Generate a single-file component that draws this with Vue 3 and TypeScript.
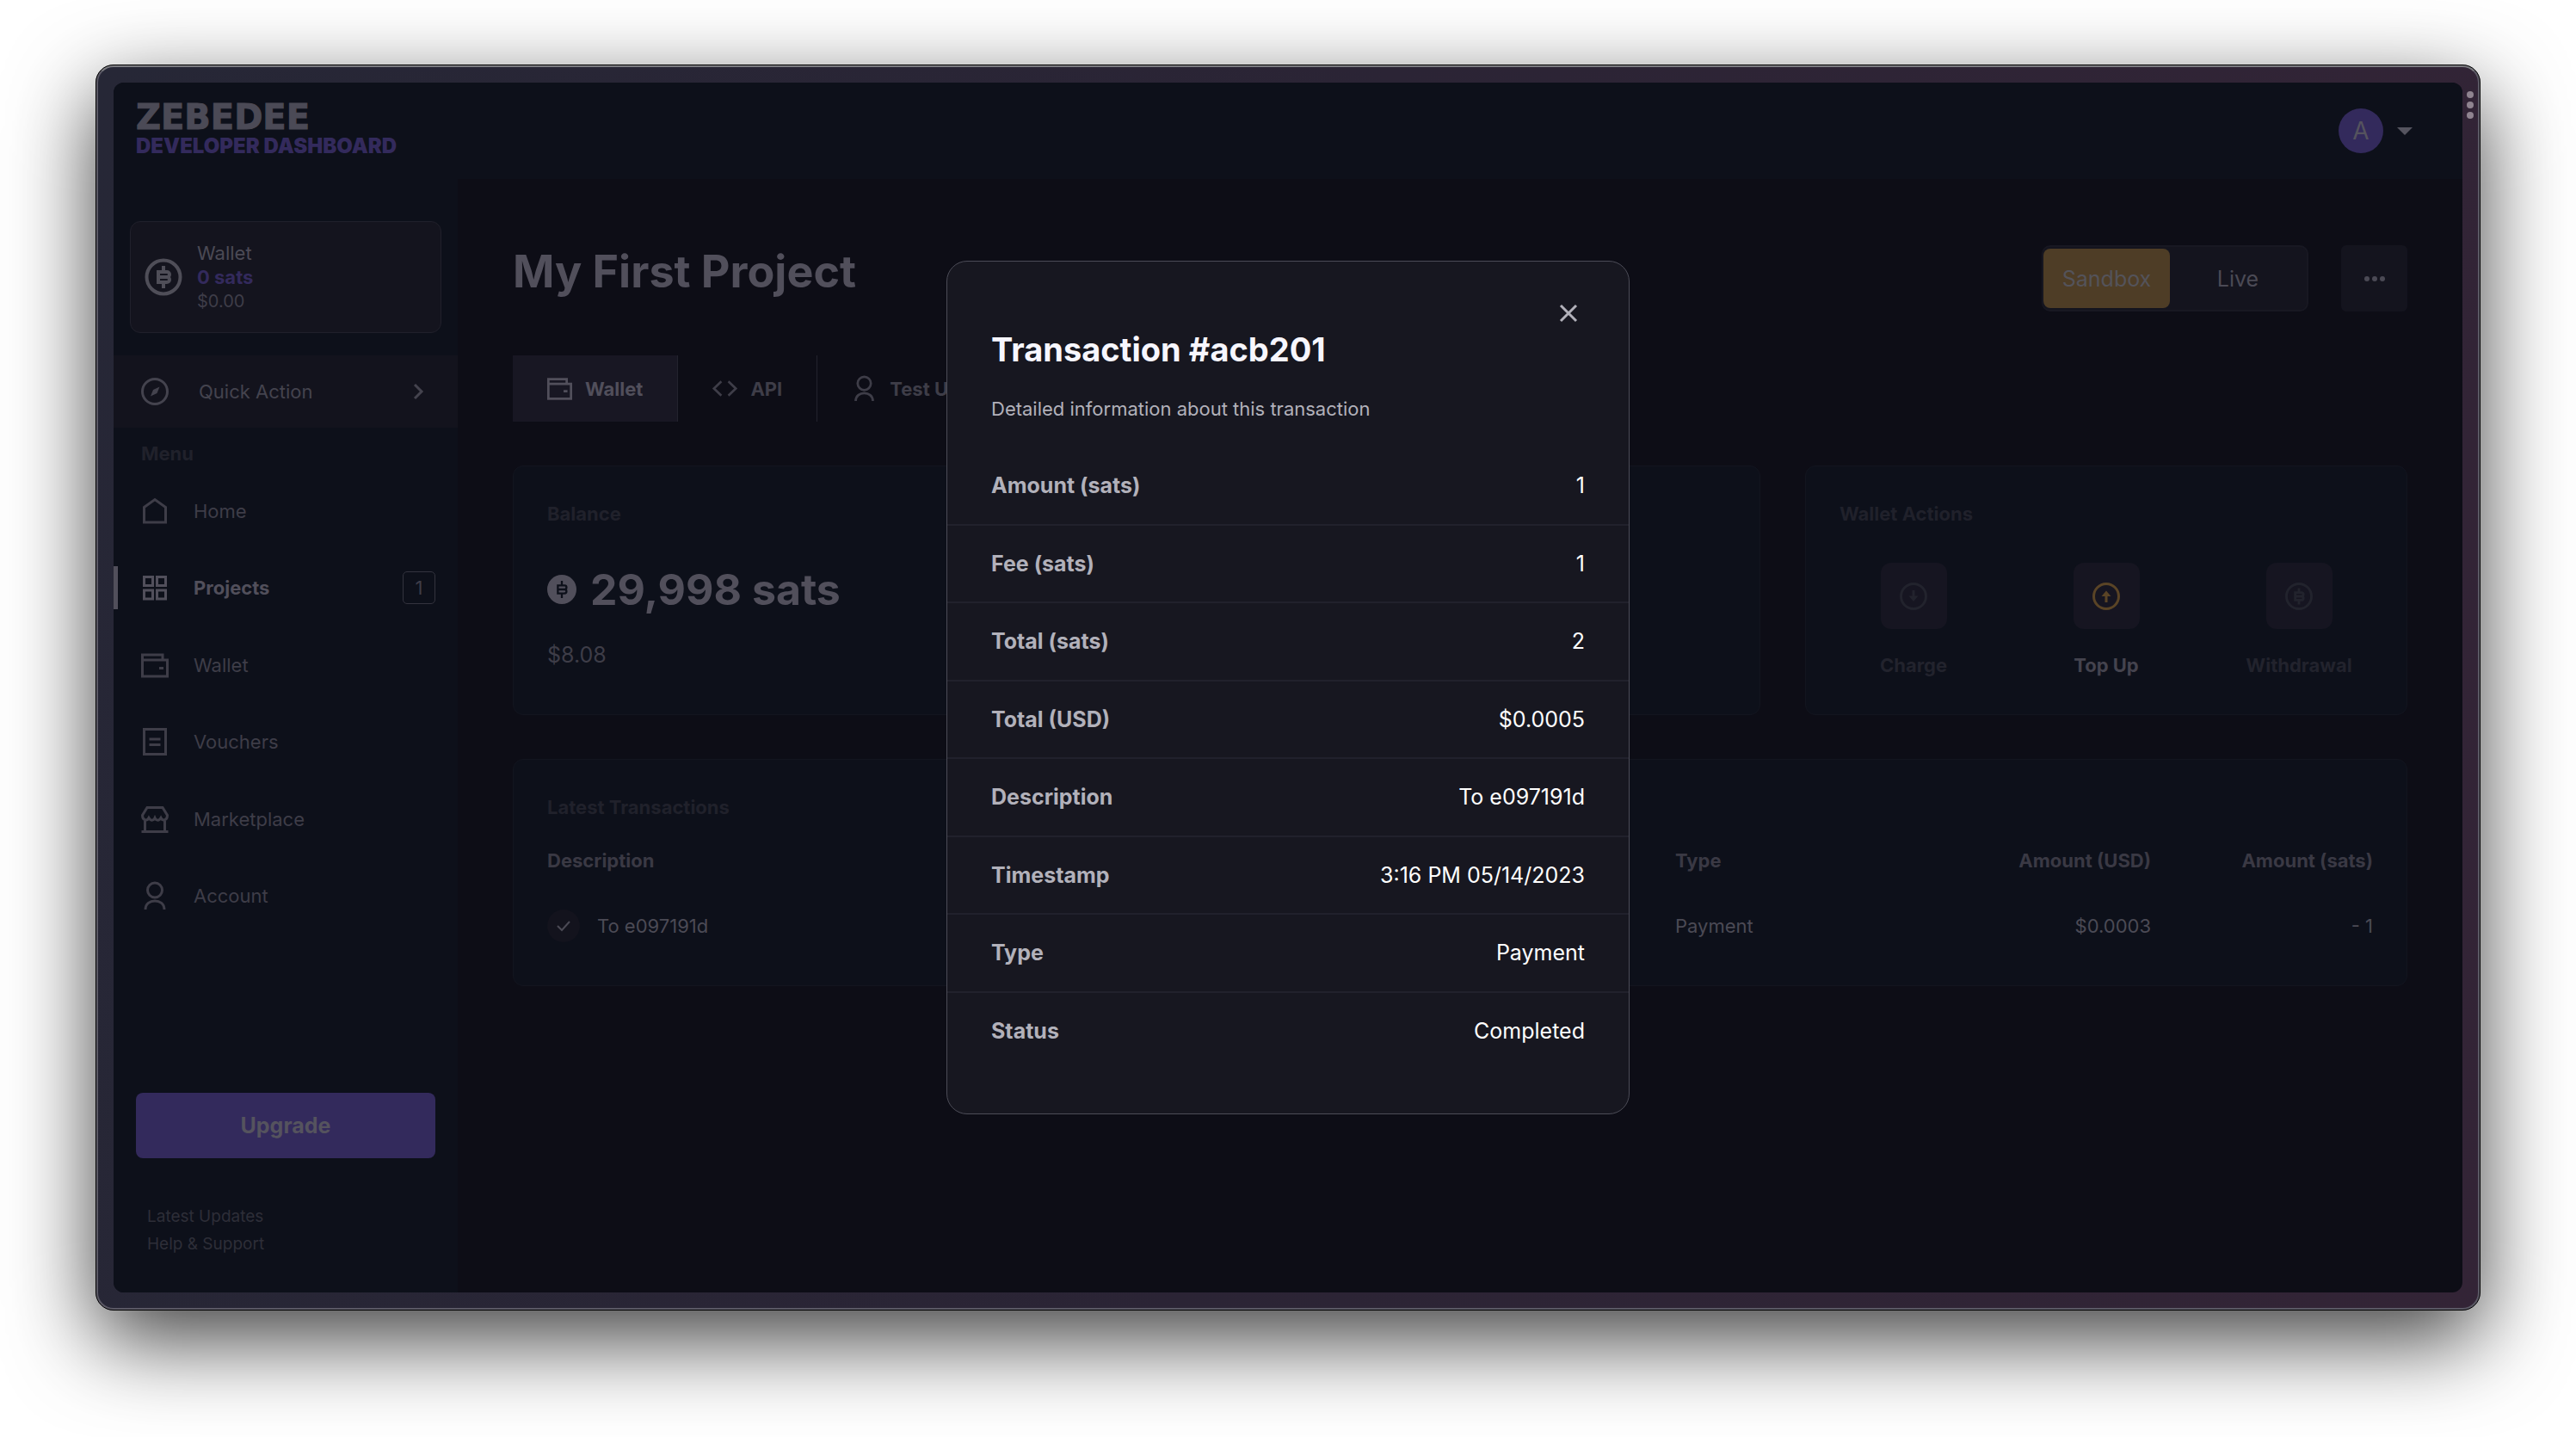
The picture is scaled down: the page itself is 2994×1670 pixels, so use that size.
<script setup lang="ts">
import { ref } from 'vue'

interface NavItem {
  label: string
  icon: string
  active?: boolean
  count?: number
}

const navItems: NavItem[] = [
  { label: 'Home', icon: 'home' },
  { label: 'Projects', icon: 'projects', active: true, count: 1 },
  { label: 'Wallet', icon: 'wallet' },
  { label: 'Vouchers', icon: 'vouchers' },
  { label: 'Marketplace', icon: 'market' },
  { label: 'Account', icon: 'account' },
]

const iconPaths: Record<string, string> = {
  home: 'M3.5 11.5 16 2.5l12.5 9V29h-25z',
  projects: 'M3.5 3.5h10v10h-10zM18.5 3.5h10v10h-10zM3.5 19h10v10h-10zM18.5 19h10v10h-10z',
  wallet: 'M1.5 10h29v19h-29zM1.5 10V4H25v6M21 19.500h5',
  vouchers: 'M3.500 1.500h25v29h-25zM9.500 13h13M9.500 19.500h13',
  market: 'M7 2.500h18l5.500 9c0 6-5.500 7-7.500 3-2 3.500-5.500 3.500-7 0-1.500 3.500-5 3.500-7 0C7 18.500 1.500 17.500 1.500 11.500zM4.500 18v12M27.500 18v12M0.500 30.500h31',
  account: 'M16 1a8.500 8.500 0 1 1 0 17a8.500 8.500 0 1 1 0-17zM5 32c0-13.500 22-13.500 22 0',
  api: 'M11.500 7 2 16l9.500 9M20.500 7l9.500 9-9.500 9',
}

const coinGlyph = 'M16 16h10a3 3 0 0 1 0 6a3 3 0 0 1 0 6H16zM16 22h10M22 9v6M22 29v6'

const tabs = [
  { label: 'Wallet', icon: 'wallet', active: true },
  { label: 'API', icon: 'api', active: false },
  { label: 'Test Users', icon: 'account', active: false },
]

const details = [
  { label: 'Amount (sats)', value: '1' },
  { label: 'Fee (sats)', value: '1' },
  { label: 'Total (sats)', value: '2' },
  { label: 'Total (USD)', value: '$0.0005' },
  { label: 'Description', value: 'To e097191d' },
  { label: 'Timestamp', value: '3:16 PM 05/14/2023' },
  { label: 'Type', value: 'Payment' },
  { label: 'Status', value: 'Completed' },
]

const modalOpen = ref(true)
</script>

<template>
  <div class="desktop">
    <div class="frame">
      <button class="frame-menu" type="button" aria-label="Window menu"><i></i><i></i><i></i></button>
      <div class="app">
        <header class="topbar">
          <a class="brand" href="#">
            <span class="brand-name">ZEBEDEE</span>
            <span class="brand-sub">DEVELOPER DASHBOARD</span>
          </a>
          <button class="profile" type="button" aria-label="Account menu">
            <span class="avatar">A</span>
            <svg class="caret" viewBox="0 0 18 9"><path d="M0 0h18L9 9z" /></svg>
          </button>
        </header>

        <div class="body">
          <aside class="sidebar">
            <a class="wallet-card" href="#">
              <svg class="coin" viewBox="0 0 44 44">
                <circle cx="22" cy="22" r="19.500" stroke-width="4" />
                <path :d="coinGlyph" stroke-width="4" />
              </svg>
              <span class="wallet-lines">
                <span class="wallet-name">Wallet</span>
                <span class="wallet-sats">0 sats</span>
                <span class="wallet-usd">$0.00</span>
              </span>
            </a>
            <button class="quick" type="button">
              <svg class="icon" viewBox="0 0 32 32">
                <circle cx="16" cy="16" r="14.500" />
                <path class="solid" d="M21.500 10.500 18.500 18l-7.500 3.500 3-7.500z" />
              </svg>
              <span>Quick Action</span>
              <svg class="chevron" viewBox="0 0 12 18"><path d="m2 1 8 8-8 8" /></svg>
            </button>
            <h2 class="menu-title">Menu</h2>
            <nav>
              <a v-for="item in navItems" :key="item.label" href="#" class="nav-item" :class="{ active: item.active }">
                <svg class="icon" viewBox="0 0 32 32"><path :d="iconPaths[item.icon]" /></svg>
                <span>{{ item.label }}</span>
                <span v-if="item.count" class="count">{{ item.count }}</span>
              </a>
            </nav>
            <div class="side-foot">
              <button class="upgrade" type="button">Upgrade</button>
              <div class="foot-links">
                <a href="#">Latest Updates</a>
                <a href="#">Help &amp; Support</a>
              </div>
            </div>
          </aside>

          <main class="content">
            <div class="title-row">
              <h1>My First Project</h1>
              <div class="title-actions">
                <div class="toggle">
                  <button class="on" type="button">Sandbox</button>
                  <button type="button">Live</button>
                </div>
                <button class="more" type="button" aria-label="More"><i></i><i></i><i></i></button>
              </div>
            </div>

            <div class="tabs">
              <button v-for="tab in tabs" :key="tab.label" type="button" class="tab" :class="{ active: tab.active }">
                <svg class="tab-icon" viewBox="0 0 32 32"><path :d="iconPaths[tab.icon]" /></svg>
                <span>{{ tab.label }}</span>
              </button>
            </div>

            <div class="cards">
              <section class="card balance">
                <h2>Balance</h2>
                <p class="amount">
                  <svg class="coin-solid" viewBox="0 0 44 44">
                    <circle cx="22" cy="22" r="22" />
                    <path :d="coinGlyph" stroke-width="3" />
                  </svg>
                  <span>29,998 sats</span>
                </p>
                <p class="usd">$8.08</p>
              </section>
              <section class="card actions">
                <h2>Wallet Actions</h2>
                <div class="action-row">
                  <button class="action" type="button">
                    <span class="tile">
                      <svg class="icon" viewBox="0 0 32 32">
                        <circle cx="16" cy="16" r="14.500" />
                        <path d="M16 9v9" /><path class="solid" d="M10.500 15.500h11L16 22z" />
                      </svg>
                    </span>
                    <span>Charge</span>
                  </button>
                  <button class="action enabled" type="button">
                    <span class="tile">
                      <svg class="icon" viewBox="0 0 32 32">
                        <circle cx="16" cy="16" r="14.500" />
                        <path d="M16 23v-9" /><path class="solid" d="M10.500 16h11L16 9.500z" />
                      </svg>
                    </span>
                    <span>Top Up</span>
                  </button>
                  <button class="action" type="button">
                    <span class="tile">
                      <svg class="icon" viewBox="0 0 44 44">
                        <circle cx="22" cy="22" r="20" stroke-width="4" />
                        <path :d="coinGlyph" stroke-width="4" />
                      </svg>
                    </span>
                    <span>Withdrawal</span>
                  </button>
                </div>
              </section>
            </div>

            <section class="card latest">
              <h2>Latest Transactions</h2>
              <table>
                <colgroup><col /><col class="c-type" /><col class="c-num" /><col class="c-num" /></colgroup>
                <thead>
                  <tr><th>Description</th><th>Type</th><th class="num">Amount (USD)</th><th class="num">Amount (sats)</th></tr>
                </thead>
                <tbody>
                  <tr>
                    <td>
                      <span class="desc">
                        <span class="check"><svg viewBox="0 0 16 12"><path d="m1 6 5 5 9-10" /></svg></span>
                        To e097191d
                      </span>
                    </td>
                    <td>Payment</td>
                    <td class="num">$0.0003</td>
                    <td class="num">- 1</td>
                  </tr>
                </tbody>
              </table>
            </section>
          </main>
        </div>

        <div v-if="modalOpen" class="overlay">
          <div class="modal" role="dialog" aria-modal="true" aria-labelledby="modal-title">
            <button class="close" type="button" aria-label="Close" @click="modalOpen = false">
              <svg viewBox="0 0 20 20"><path d="m1 1 18 18M19 1 1 19" /></svg>
            </button>
            <h2 id="modal-title">Transaction #acb201</h2>
            <p class="lead">Detailed information about this transaction</p>
            <dl>
              <div v-for="row in details" :key="row.label" class="detail">
                <dt>{{ row.label }}</dt>
                <dd>{{ row.value }}</dd>
              </div>
            </dl>
          </div>
        </div>
      </div>
    </div>
  </div>
</template>

<style>
body {
  margin: 0;
  background: #fff;
}
</style>

<style scoped>
* {
  box-sizing: border-box;
}
h1, h2, p, dl, dd {
  margin: 0;
}
button {
  margin: 0;
  padding: 0;
  border: 0;
  background: none;
  font: inherit;
  color: inherit;
}
a {
  color: inherit;
  text-decoration: none;
}
svg {
  flex: none;
  display: block;
  overflow: visible;
  fill: none;
  stroke: currentColor;
}
.desktop {
  min-height: 100vh;
  padding: 75px 111px 147px;
  display: flex;
  overflow: hidden;
  font-family: Inter, "Liberation Sans", sans-serif;
  font-size: 22px;
  line-height: 32px;
  color: #4b4a55;
}
.frame {
  position: relative;
  flex: 1;
  display: flex;
  padding: 18px;
  border: 3px solid #5b5965;
  border-top-color: #7b7b80;
  border-radius: 21px;
  outline: 1px solid #000;
  outline-offset: -1px;
  background: linear-gradient(100deg, #262736, #2b2435 50%, #332436);
  box-shadow: 0 34px 100px rgba(0, 0, 0, 0.75);
}
.frame-menu {
  position: absolute;
  top: 28px;
  right: 5px;
  display: grid;
  gap: 4px;
}
.frame-menu i {
  width: 8px;
  height: 8px;
  border-radius: 50%;
  background: #8f8490;
}
.app {
  position: relative;
  flex: 1;
  display: flex;
  flex-direction: column;
  border-radius: 12px;
  overflow: hidden;
  background: #0d0d16;
}
.topbar {
  height: 112px;
  padding: 0 58px 0 26px;
  display: flex;
  align-items: center;
  justify-content: space-between;
  background: #0d101a;
}
.brand {
  display: grid;
}
.brand-name {
  font-family: "DejaVu Sans", sans-serif;
  font-weight: 700;
  font-size: 40px;
  line-height: 36px;
  color: #4b4a56;
  -webkit-text-stroke: 1px #4b4a56;
}
.brand-sub {
  font-size: 24px;
  font-weight: 900;
  line-height: 32px;
  color: #332a5c;
}
.profile {
  display: flex;
  align-items: center;
  gap: 16px;
}
.avatar {
  width: 52px;
  height: 52px;
  border-radius: 50%;
  background: #332a5c;
  font-size: 28px;
  line-height: 52px;
  text-align: center;
  color: #55535e;
}
.caret {
  width: 18px;
  height: 9px;
  fill: #55545f;
  stroke: none;
}
.body {
  flex: 1;
  display: flex;
}
.sidebar {
  width: 400px;
  flex: none;
  padding-top: 49px;
  display: flex;
  flex-direction: column;
  background: #0d101a;
  color: #3e3d48;
}
.wallet-card {
  height: 130px;
  margin: 0 19px 26px;
  padding: 0 16px;
  display: flex;
  align-items: center;
  gap: 17px;
  border: 1px solid #20202b;
  border-radius: 12px;
  background: #14141e;
}
.coin {
  width: 44px;
  height: 44px;
  color: #4f4e58;
}
.wallet-lines {
  display: grid;
  line-height: 28px;
}
.wallet-name {
  color: #4b4a55;
}
.wallet-sats {
  font-weight: 700;
  color: #332a5c;
}
.wallet-usd {
  font-size: 20px;
}
.quick {
  height: 84px;
  padding: 0 40px 0 32px;
  display: flex;
  align-items: center;
  gap: 35px;
  background: #13131d;
  color: #44434e;
}
.icon {
  width: 32px;
  height: 32px;
  stroke-width: 3;
}
.solid {
  fill: currentColor;
  stroke: none;
}
.chevron {
  width: 12px;
  height: 18px;
  margin-left: auto;
  stroke-width: 3;
}
.menu-title {
  margin: 18px 32px 10px;
  font-size: 22px;
  line-height: 24px;
  font-weight: 700;
  color: #20212b;
}
nav {
  height: 537px;
  display: grid;
  grid-auto-rows: 1fr;
}
.nav-item {
  padding: 0 26px 0 32px;
  display: flex;
  align-items: center;
  gap: 29px;
}
.nav-item.active {
  color: #514f5b;
  font-weight: 700;
  background: linear-gradient(#514f5b, #514f5b) left center / 5px 50px no-repeat;
}
.count {
  width: 38px;
  height: 38px;
  margin-left: auto;
  border: 1px solid #33333e;
  border-radius: 5px;
  line-height: 36px;
  font-weight: 400;
  text-align: center;
  color: #3e3d48;
}
.side-foot {
  margin-top: auto;
  padding: 0 26px 40px;
}
.upgrade {
  width: 100%;
  height: 76px;
  border-radius: 8px;
  background: #332a5c;
  font-size: 25px;
  font-weight: 700;
  color: #55535e;
}
.foot-links {
  margin: 52px 13px 0;
  display: grid;
  font-size: 19px;
  color: #2d2e38;
}
.content {
  flex: 1;
  min-width: 0;
  padding: 77px 64px 0;
  display: flex;
  flex-direction: column;
  gap: 51px;
}
.title-row {
  display: flex;
  justify-content: space-between;
}
h1 {
  font-size: 52px;
  line-height: 62px;
  font-weight: 700;
  color: #514f5b;
}
.title-actions {
  display: flex;
  gap: 38px;
}
.toggle {
  width: 310px;
  height: 77px;
  padding: 2px 1px;
  display: grid;
  grid-template-columns: 147px 1fr;
  border: 2px solid #181822;
  border-left-width: 1px;
  border-radius: 10px;
  background: #14141e;
  font-size: 25px;
  color: #4b4a55;
}
.toggle .on {
  border-radius: 8px;
  background: #4e3d26;
  color: #54535a;
}
.more {
  width: 77px;
  height: 77px;
  display: flex;
  align-items: center;
  justify-content: center;
  gap: 3px;
  border-radius: 6px;
  background: #14141e;
}
.more i {
  width: 6px;
  height: 6px;
  border-radius: 50%;
  background: #4b4a55;
}
.tabs {
  display: flex;
  height: 77px;
}
.tab {
  display: flex;
  align-items: center;
  gap: 15px;
  padding: 0 40px;
  border-right: 1px solid #23232e;
  font-weight: 700;
  color: #3e3d48;
}
.tab:last-child {
  border-right: 0;
}
.tab.active {
  background: #181723;
  color: #514f5b;
}
.tab-icon {
  width: 29px;
  height: 29px;
  stroke-width: 3;
}
.cards {
  display: grid;
  grid-template-columns: 1fr 700px;
  gap: 52px;
}
.card {
  padding: 39px;
  border: 1px solid #13151f;
  border-radius: 12px;
  background: #0d101a;
}
.card h2 {
  font-size: 22px;
  line-height: 32px;
  font-weight: 700;
  color: #20212b;
}
.balance,
.actions {
  height: 290px;
}
.amount {
  margin: 40px 0 28px;
  display: flex;
  align-items: center;
  gap: 16px;
  font-size: 50px;
  line-height: 64px;
  font-weight: 700;
  color: #514f5b;
}
.coin-solid {
  width: 34px;
  height: 34px;
  fill: currentColor;
  stroke: none;
}
.coin-solid path {
  fill: none;
  stroke: #0d101a;
}
.usd {
  font-size: 25px;
  color: #3e3d48;
}
.action-row {
  margin: 41px -26px 0;
  display: grid;
  grid-template-columns: repeat(3, 1fr);
}
.action {
  display: grid;
  justify-items: center;
  gap: 26px;
  font-weight: 700;
  color: #22232d;
}
.tile {
  width: 77px;
  height: 77px;
  display: grid;
  place-items: center;
  border-radius: 12px;
  background: #161521;
}
.enabled {
  color: #44434e;
}
.enabled .tile {
  color: #5a4426;
}
.latest {
  height: 264px;
}
table {
  width: 100%;
  margin-top: 21px;
  table-layout: fixed;
  border-collapse: collapse;
  color: #4b4a55;
}
.c-type {
  width: 295px;
}
.c-num {
  width: 258px;
}
th,
td {
  padding: 0;
  text-align: left;
}
th {
  height: 50px;
  font-weight: 700;
  color: #3a3944;
}
td {
  height: 102px;
}
.num {
  text-align: right;
}
.desc {
  display: flex;
  align-items: center;
  gap: 20px;
}
.check {
  width: 38px;
  height: 38px;
  display: grid;
  place-items: center;
  border-radius: 50%;
  background: #13131d;
}
.check svg {
  width: 16px;
  height: 12px;
  stroke-width: 2;
}
.overlay {
  position: absolute;
  inset: 0;
  display: grid;
  place-items: center;
}
.modal {
  width: 794px;
  height: 992px;
  padding: 50px 0 52px;
  display: flex;
  flex-direction: column;
  border: 1px solid #4c4c57;
  border-radius: 24px;
  background: #171720;
  color: #b2b1ba;
}
.close {
  align-self: flex-end;
  margin-right: 60px;
}
.close svg {
  width: 20px;
  height: 20px;
  stroke-width: 3;
}
.modal h2 {
  margin: 8px 51px 0;
  font-size: 38px;
  line-height: 48px;
  font-weight: 700;
  color: #f7f6fe;
}
.lead {
  margin: 29px 51px;
}
dl {
  flex: 1;
  display: flex;
  flex-direction: column;
  font-size: 25px;
}
.detail {
  flex: 1;
  padding: 0 51px;
  display: flex;
  align-items: center;
  justify-content: space-between;
}
.detail + .detail {
  border-top: 2px solid #21212c;
}
dt {
  font-weight: 700;
}
dd {
  color: #fff;
}
</style>
